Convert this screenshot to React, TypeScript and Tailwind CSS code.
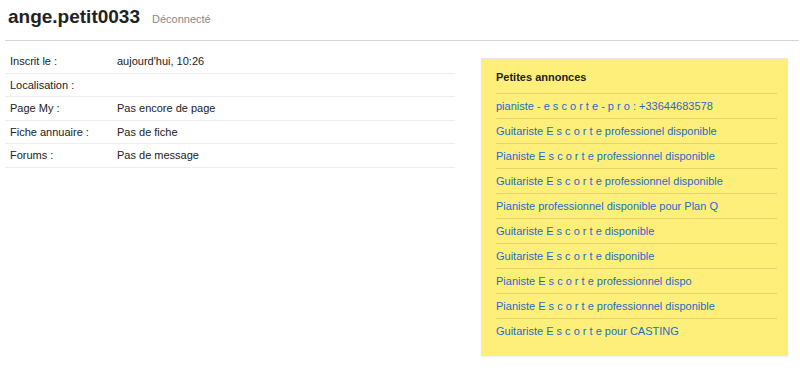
import React from 'react';

const infos = [
  { label: 'Inscrit le :', value: "aujourd'hui, 10:26" },
  { label: 'Localisation :', value: '' },
  { label: 'Page My :', value: 'Pas encore de page' },
  { label: 'Fiche annuaire :', value: 'Pas de fiche' },
  { label: 'Forums :', value: 'Pas de message' },
];

const annonces = [
  'pianiste - e s c o r t e - p r o : +33644683578',
  'Guitariste E s c o r t e professionel disponible',
  'Pianiste E s c o r t e professionnel disponible',
  'Guitariste E s c o r t e professionnel disponible',
  'Pianiste professionnel disponible pour Plan Q',
  'Guitariste E s c o r t e disponible',
  'Guitariste E s c o r t e disponible',
  'Pianiste E s c o r t e professionnel dispo',
  'Pianiste E s c o r t e professionnel disponible',
  'Guitariste E s c o r t e pour CASTING',
];

const App: React.FC = () => {
  return (
    <div className="w-[800px] h-[368px] bg-white pl-[5px] pr-[1px] text-[11px] text-[#222] font-['Liberation_Sans',Arial,sans-serif] overflow-hidden">
      <div className="flex items-baseline gap-[12px] pl-[3px] pt-[6px] h-[41px] border-b border-[#d4d4d4]">
        <h1 className="text-[19px] leading-[22px] font-bold text-[#222]">ange.petit0033</h1>
        <span className="text-[11px] text-[#888]">Déconnecté</span>
      </div>

      <div className="flex pt-[9px]">
        <div className="w-[450px]">
          {infos.map((row) => (
            <div key={row.label} className="flex items-center h-[23.5px] border-b border-[#ededed] pl-[5px]">
              <div className="w-[107px]">{row.label}</div>
              <div>{row.value}</div>
            </div>
          ))}
        </div>

        <div className="ml-[26px] mt-[8px] w-[307px] bg-[#feef7b] border border-[#e6e6e6] shadow-[0_1px_2px_rgba(0,0,0,0.08)] pl-[14px] pr-[10px] pt-[11px] pb-[11px]">
          <div className="h-[24px] leading-[13px] pt-[1px] font-bold border-b border-[#e3d36c] text-[#222]">
            Petites annonces
          </div>
          {annonces.map((a, i) => (
            <div
              key={i}
              className={`h-[25px] flex items-center ${i < annonces.length - 1 ? 'border-b border-[#e3d36c]' : ''}`}
            >
              <a href="#" className="text-[#1f6cc8]">{a}</a>
            </div>
          ))}
        </div>
      </div>
    </div>
  );
};

export default App;
